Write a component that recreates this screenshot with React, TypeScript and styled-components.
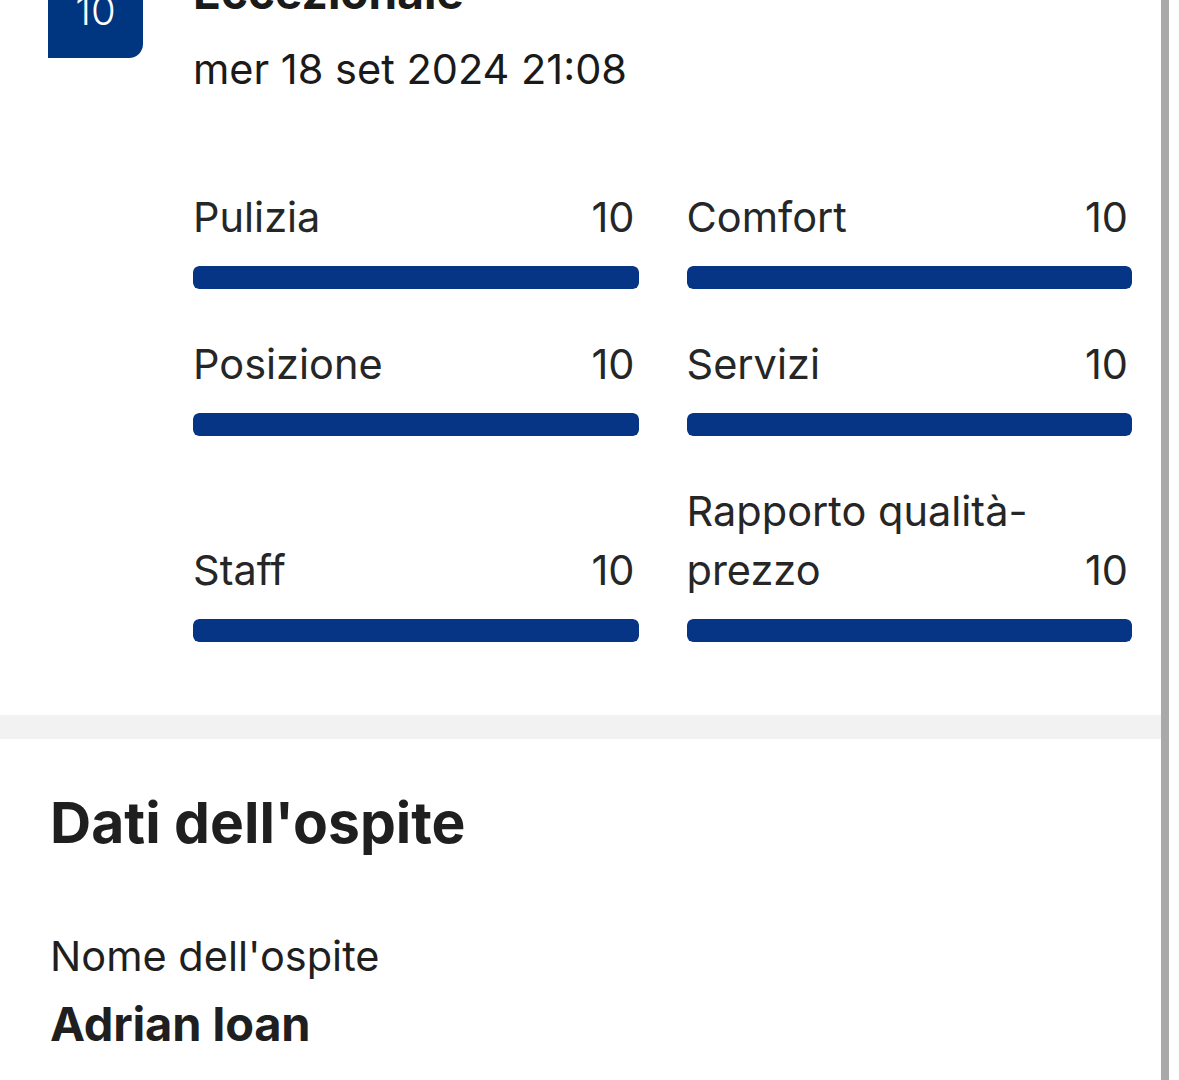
import React from "react";
import styled, { createGlobalStyle } from "styled-components";

type SubScore = {
  label: string,
  value: number,
}

const subScores: SubScore[] = [
  { label: "Pulizia", value: 10 },
  { label: "Comfort", value: 10 },
  { label: "Posizione", value: 10 },
  { label: "Servizi", value: 10 },
  { label: "Staff", value: 10 },
  { label: "Rapporto qualità-prezzo", value: 10 },
];

const GlobalStyle = createGlobalStyle`
  html, body {
    margin: 0;
    padding: 0;
    background: #ffffff;
  }
  body {
    font-family: Inter, Roboto, "Noto Sans", "Liberation Sans", sans-serif;
    color: #262626;
    overflow: hidden;
  }
`;

const App = () => {
  return (
    <>
      <GlobalStyle />
      <Page>
        <Main>
          <ReviewSection>
            <ReviewHeader>
              <ScoreBadge>10</ScoreBadge>
              <ReviewBody>
                <ReviewTitle>Eccezionale</ReviewTitle>
                <ReviewDate>mer 18 set 2024 21:08</ReviewDate>
                <ScoreGrid>
                  {subScores.map((s) => (
                    <ScoreCell key={s.label}>
                      <ScoreLine>
                        <ScoreLabel>{s.label}</ScoreLabel>
                        <ScoreValue>{s.value}</ScoreValue>
                      </ScoreLine>
                      <Track>
                        <Fill style={{ width: `${s.value * 10}%` }} />
                      </Track>
                    </ScoreCell>
                  ))}
                </ScoreGrid>
              </ReviewBody>
            </ReviewHeader>
          </ReviewSection>
          <Divider />
          <GuestSection>
            <SectionTitle>Dati dell'ospite</SectionTitle>
            <FieldLabel>Nome dell'ospite</FieldLabel>
            <FieldValue>Adrian Ioan</FieldValue>
          </GuestSection>
        </Main>
        <EdgeLine />
        <EdgeGap />
      </Page>
    </>
  );
};

export default App;

const Page = styled.div`
  display: flex;
  width: 1179px;
  height: 1080px;
  overflow: hidden;
`;

const Main = styled.main`
  flex: 1;
  display: flex;
  flex-direction: column;
`;

const EdgeLine = styled.div`
  width: 8px;
  background: #a9a9a9;
`;

const EdgeGap = styled.div`
  width: 10px;
  background: #ffffff;
`;

// the page is scrolled a little: the top of the review card sits above the fold
const ReviewSection = styled.section`
  padding: 0 29px 73px 48px;
  margin-top: -37px;
`;

const ReviewHeader = styled.div`
  display: flex;
  gap: 50px;
`;

const ScoreBadge = styled.div`
  flex: 0 0 95px;
  height: 95px;
  display: flex;
  align-items: center;
  justify-content: center;
  background: #003580;
  color: #ffffff;
  font-size: 40px;
  font-weight: 300;
  border-radius: 14px 14px 14px 0;
`;

const ReviewBody = styled.div`
  flex: 1;
  display: flex;
  flex-direction: column;
`;

const ReviewTitle = styled.h3`
  margin: 0;
  font-size: 46px;
  line-height: 59px;
  font-weight: 700;
  color: #1a1a1a;
`;

const ReviewDate = styled.p`
  margin: 18px 0 0;
  font-size: 41.5px;
  line-height: 59px;
  color: #1a1a1a;
`;

const ScoreGrid = styled.div`
  margin-top: 89px;
  display: grid;
  grid-template-columns: 1fr 1fr;
  column-gap: 48px;
  row-gap: 46px;
`;

const ScoreCell = styled.div`
  display: flex;
  flex-direction: column;
  justify-content: flex-end;
`;

const ScoreLine = styled.div`
  display: flex;
  align-items: flex-end;
  justify-content: space-between;
  gap: 16px;
  font-size: 41.5px;
  line-height: 59px;
  color: #262626;
`;

const ScoreLabel = styled.span`
  flex: 1;
  min-width: 0;
`;

const ScoreValue = styled.span`
  flex: 0 0 auto;
  padding-right: 4px;
`;

const Track = styled.div`
  margin-top: 19px;
  height: 23px;
  border-radius: 6px;
  background: #e6e6e6;
  overflow: hidden;
`;

const Fill = styled.div`
  height: 100%;
  background: #073585;
  border-radius: 6px;
`;

const Divider = styled.div`
  height: 24px;
  background: #f2f2f2;
`;

const GuestSection = styled.section`
  padding: 49px 29px 0 50px;
  display: flex;
  flex-direction: column;
`;

const SectionTitle = styled.h2`
  margin: 0;
  font-size: 57px;
  line-height: 70px;
  font-weight: 700;
  color: #1f1f1f;
`;

const FieldLabel = styled.div`
  margin-top: 69px;
  font-size: 41.5px;
  line-height: 59px;
  color: #1f1f1f;
`;

const FieldValue = styled.div`
  margin-top: 8px;
  font-size: 47px;
  line-height: 60px;
  font-weight: 700;
  letter-spacing: -0.2px;
  color: #1f1f1f;
`;
